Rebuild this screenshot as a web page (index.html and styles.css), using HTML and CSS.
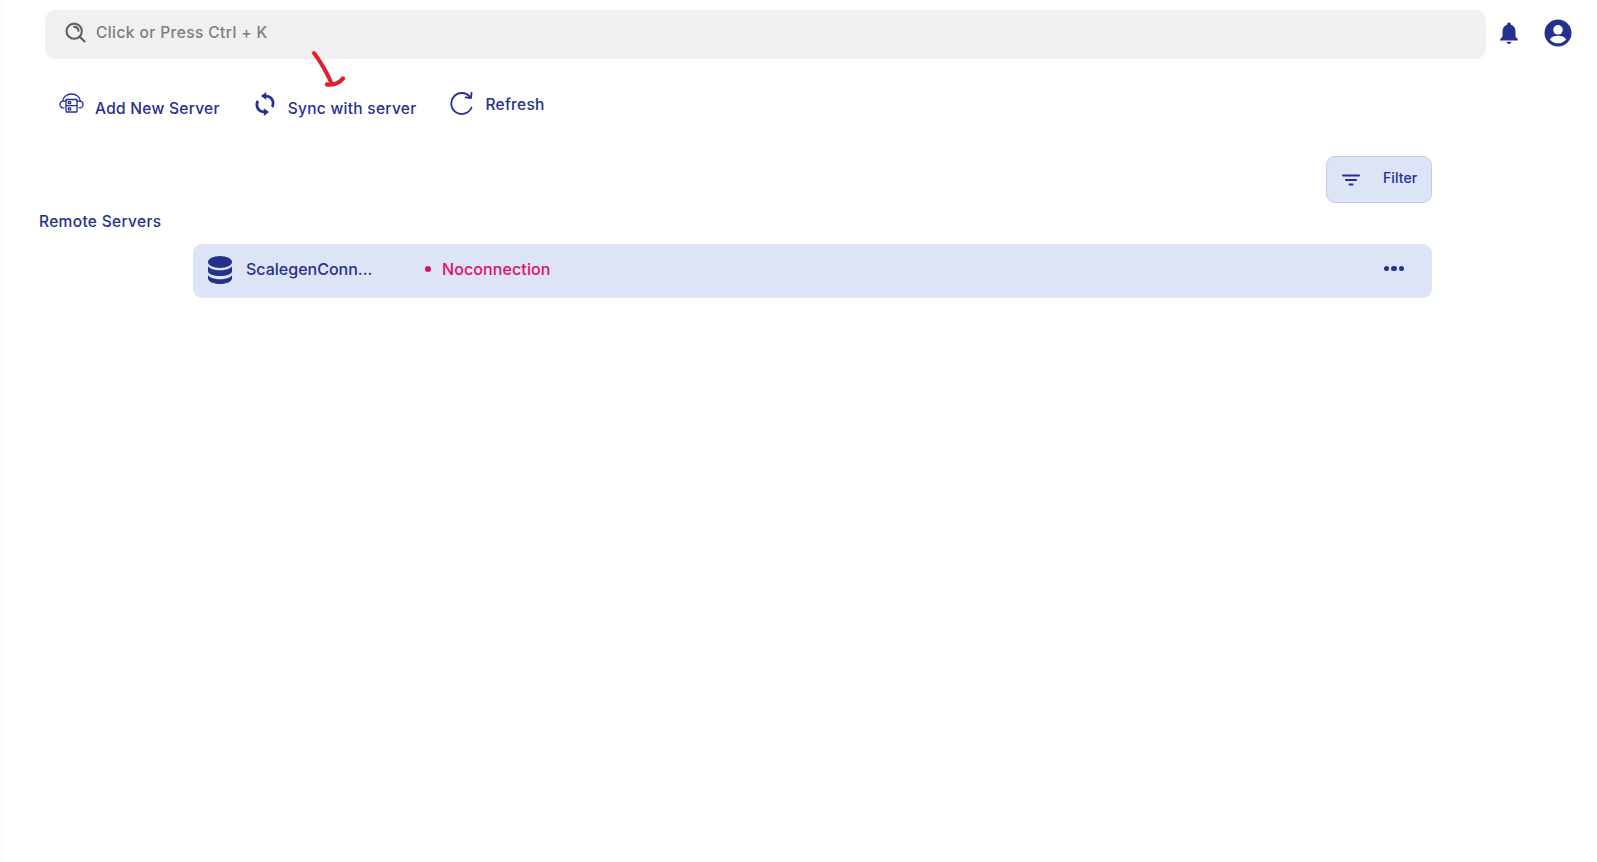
FILE: index.html
```html
<!DOCTYPE html>
<html lang="en">
<head>
<meta charset="utf-8">
<title>Remote Servers</title>
<link rel="stylesheet" href="styles.css">
</head>
<body>
<div class="page">
  <aside class="edge"></aside>
  <main class="main">
    <header class="topbar">
      <div class="search">
        <svg class="search-icon" viewBox="0 0 24 24" fill="none" stroke="#5f5f5f" stroke-width="2.400" stroke-linecap="round"><circle cx="10.500" cy="10.500" r="8.700"/><path d="M10.500 5.600a5 5 0 0 1 5 4.400"/><path d="M17 17l5.400 5.200"/></svg>
        <span class="search-text">Click or Press Ctrl + K</span>
      </div>
      <svg class="bell" viewBox="0 0 20 24" fill="#25308f"><path d="M10 1.400c-1.100 0-1.900.8-1.900 1.900v.5C5 4.700 3.500 7.300 3.500 10.500v5L1.200 18.300v1.300h17.600v-1.300L16.500 15.500v-5c0-3.200-1.500-5.800-4.600-6.700v-.5c0-1.100-.8-1.900-1.900-1.900z"/><path d="M7.600 20.700h4.800c0 1.300-1.100 2.200-2.400 2.200s-2.400-.9-2.400-2.200z"/></svg>
      <svg class="user" viewBox="0 0 28 28"><circle cx="14" cy="14" r="13.500" fill="#25308f"/><circle cx="14" cy="10.800" r="4.800" fill="#fff"/><path d="M5.800 20.400c1.500-2.500 4.600-3.600 8.200-3.600s6.700 1.100 8.200 3.600c-1.900 2.400-4.900 3.900-8.200 3.900s-6.300-1.500-8.200-3.900z" fill="#fff"/></svg>
    </header>

    <nav class="toolbar">
      <button class="tool tool-add">
        <svg class="icon-add" viewBox="0 0 25 20" fill="none" stroke="#25308f" stroke-width="1.300" stroke-linecap="round" stroke-linejoin="round"><path d="M5 14.800H4C2.200 14.800 1 13.200 1 11.300 1 9.700 2.100 8.400 3.800 8.100 4.200 4 7.700 1 12.500 1s8.300 3 8.700 7.100c1.700.3 2.800 1.600 2.800 3.200 0 1.900-1.200 3.500-3 3.500h-1"/><path d="M3.800 8.100h3.200M21.200 8.100H18"/><rect x="7" y="6.500" width="11" height="12.500" rx=".7"/><path d="M7 12.700h11"/><rect x="9.400" y="14.900" width="2.200" height="2"/><rect x="9.400" y="8.600" width="2.200" height="2"/></svg>
        <span>Add New Server</span>
      </button>
      <button class="tool tool-sync">
        <svg class="icon-sync" viewBox="0 0 20 26" fill="#25308f"><path d="M11.200 1L6 4.900l5.200 3.900V6.600c3.200.2 5.500 2.600 5.500 5.700 0 1-.2 1.900-.7 2.700l2 1.900c.9-1.300 1.500-2.900 1.500-4.600 0-4.600-3.600-8.300-8.300-8.500z"/><path d="M8.800 25l5.200-3.900-5.200-3.900v2.200c-3.200-.2-5.500-2.600-5.500-5.700 0-1 .2-1.900.7-2.700L2 9.100C1.100 10.400.5 12 .5 13.700c0 4.600 3.600 8.300 8.300 8.500z"/></svg>
        <span>Sync with server</span>
      </button>
      <button class="tool tool-refresh">
        <svg class="icon-refresh" viewBox="0 0 24 24" fill="none" stroke="#25308f" stroke-width="1.800" stroke-linecap="round" stroke-linejoin="round"><path d="M21.500 15.500A10.500 10.500 0 1 1 19.800 4.700"/><path d="M21 .8v5.200h-5.200" fill="none" transform="rotate(6 21 6)"/></svg>
        <span>Refresh</span>
      </button>
    </nav>

    <div class="filter-row">
      <button class="filter">
        <svg class="icon-filter" viewBox="0 0 18 12" fill="#25308f"><rect x="0" y="0.500" width="18" height="2" rx="1"/><rect x="3" y="5" width="12" height="2" rx="1"/><rect x="6.500" y="9.500" width="5" height="2" rx="1"/></svg>
        <span>Filter</span>
      </button>
    </div>

    <h2 class="section-title">Remote Servers</h2>

    <section class="server">
      <svg class="icon-db" viewBox="0 0 24 28" fill="#25308f"><ellipse cx="12" cy="6" rx="12" ry="6"/><path d="M0 10.200C2 13 7 14.200 12 14.200S22 13 24 10.200v5C24 18 18.500 20 12 20S0 18 0 15.200z"/><path d="M0 19.200C2 22 7 23.200 12 23.200S22 22 24 19.200v3C24 25.500 18.500 28 12 28S0 25.500 0 22.200z"/></svg>
      <span class="server-name">ScalegenConn...</span>
      <span class="status"><i class="status-dot"></i>Noconnection</span>
      <span class="more"><i></i><i></i><i></i></span>
    </section>
  </main>
</div>
<svg class="annotation" viewBox="0 0 40 40" fill="none" stroke="#e0202c" stroke-linecap="round" stroke-linejoin="round"><path d="M5 3c6 8 12 18 17 29" stroke-width="4"/><path d="M18 34.500c6.500 .6 12 -1 16 -6" stroke-width="4.400"/></svg>
</body>
</html>
```

FILE: styles.css
```css
* { box-sizing: border-box; }
html, body { margin: 0; height: 100%; background: #fff; }
body {
  font-family: "Inter", "Lato", sans-serif;
  color: #25308f;
  overflow: hidden;
}
.page { display: flex; height: 862px; position: relative; }
.edge { width: 4px; flex: none; background: #fcfcfc; border-right: 1px solid #f8f8f8; }
.main { flex: 1; min-width: 0; }

.topbar { display: flex; align-items: flex-start; padding: 10px 0 0 41px; height: 59px; }
.search {
  width: 1441px;
  height: 49px;
  background: #f0f0f0;
  border-radius: 11px;
  display: flex;
  align-items: center;
  padding: 0 0 4px 20px;
  flex: none;
}
.search-icon { width: 21px; height: 21px; flex: none; }
.search-text { margin-left: 10px; font-size: 15.500px; font-weight: 500; letter-spacing: 0.42px; color: #7d7d7d; }
.bell { width: 20px; height: 24px; margin: 11px 0 0 13px; flex: none; }
.user { width: 28px; height: 28px; margin: 9px 0 0 25px; flex: none; }

.toolbar { display: flex; align-items: flex-start; padding: 30px 0 0 55px; height: 97px; }
.tool {
  display: flex;
  align-items: center;
  border: 0;
  background: none;
  padding: 0;
  font: inherit;
  font-size: 15.500px;
  font-weight: 500;
  letter-spacing: 0.28px;
  color: #25308f;
  white-space: nowrap;
}
.tool span { display: block; }
.tool-add { margin-top: 7px; }
.tool-add span { margin: 3px 0 0 11px; }
.icon-add { width: 25px; height: 20px; margin-top: -8px; }
.tool-sync { margin-left: 35px; margin-top: 4px; }
.tool-sync span { margin: 6px 0 0 13px; }
.icon-sync { width: 20px; height: 26px; margin-top: -3px; }
.tool-refresh { margin-left: 34px; margin-top: 3px; }
.tool-refresh span { margin-left: 11px; }
.icon-refresh { width: 24px; height: 24px; }

.filter-row { display: flex; padding-left: 1322px; }
.filter {
  width: 106px;
  height: 47px;
  display: flex;
  align-items: center;
  background: #dce4f6;
  border: 1px solid #c3cde9;
  border-radius: 9px;
  padding: 0 0 5px 15px;
  font: inherit;
  font-size: 14px;
  font-weight: 500;
  letter-spacing: 0.1px;
  color: #25308f;
}
.icon-filter { width: 18px; height: 12px; margin-top: 5px; }
.filter span { margin-left: 23px; }

.section-title {
  margin: 9px 0 0 35px;
  font-size: 15.500px;
  font-weight: 500;
  line-height: 20px;
  letter-spacing: 0.33px;
}

.server {
  margin: 12px 0 0 189px;
  width: 1239px;
  height: 54px;
  background: #dce4f6;
  border-radius: 9px;
  display: flex;
  align-items: center;
  padding: 0 0 4px 15px;
}
.icon-db { width: 24px; height: 28px; flex: none; margin-top: 2px; }
.server-name { margin-left: 14px; width: 179px; font-size: 16px; font-weight: 500; letter-spacing: 0; }
.status {
  display: flex;
  align-items: center;
  font-size: 16px;
  font-weight: 500;
  letter-spacing: 0.1px;
  color: #e0115f;
}
.status-dot { width: 6px; height: 6px; border-radius: 50%; background: #e0115f; margin-right: 11px; }
.more { display: flex; gap: 2px; margin-left: auto; margin-right: 28px; margin-top: -1px; }
.more i { width: 5.500px; height: 5.500px; border-radius: 50%; background: #25308f; }

.annotation { position: absolute; left: 309px; top: 50px; width: 40px; height: 40px; }
```
